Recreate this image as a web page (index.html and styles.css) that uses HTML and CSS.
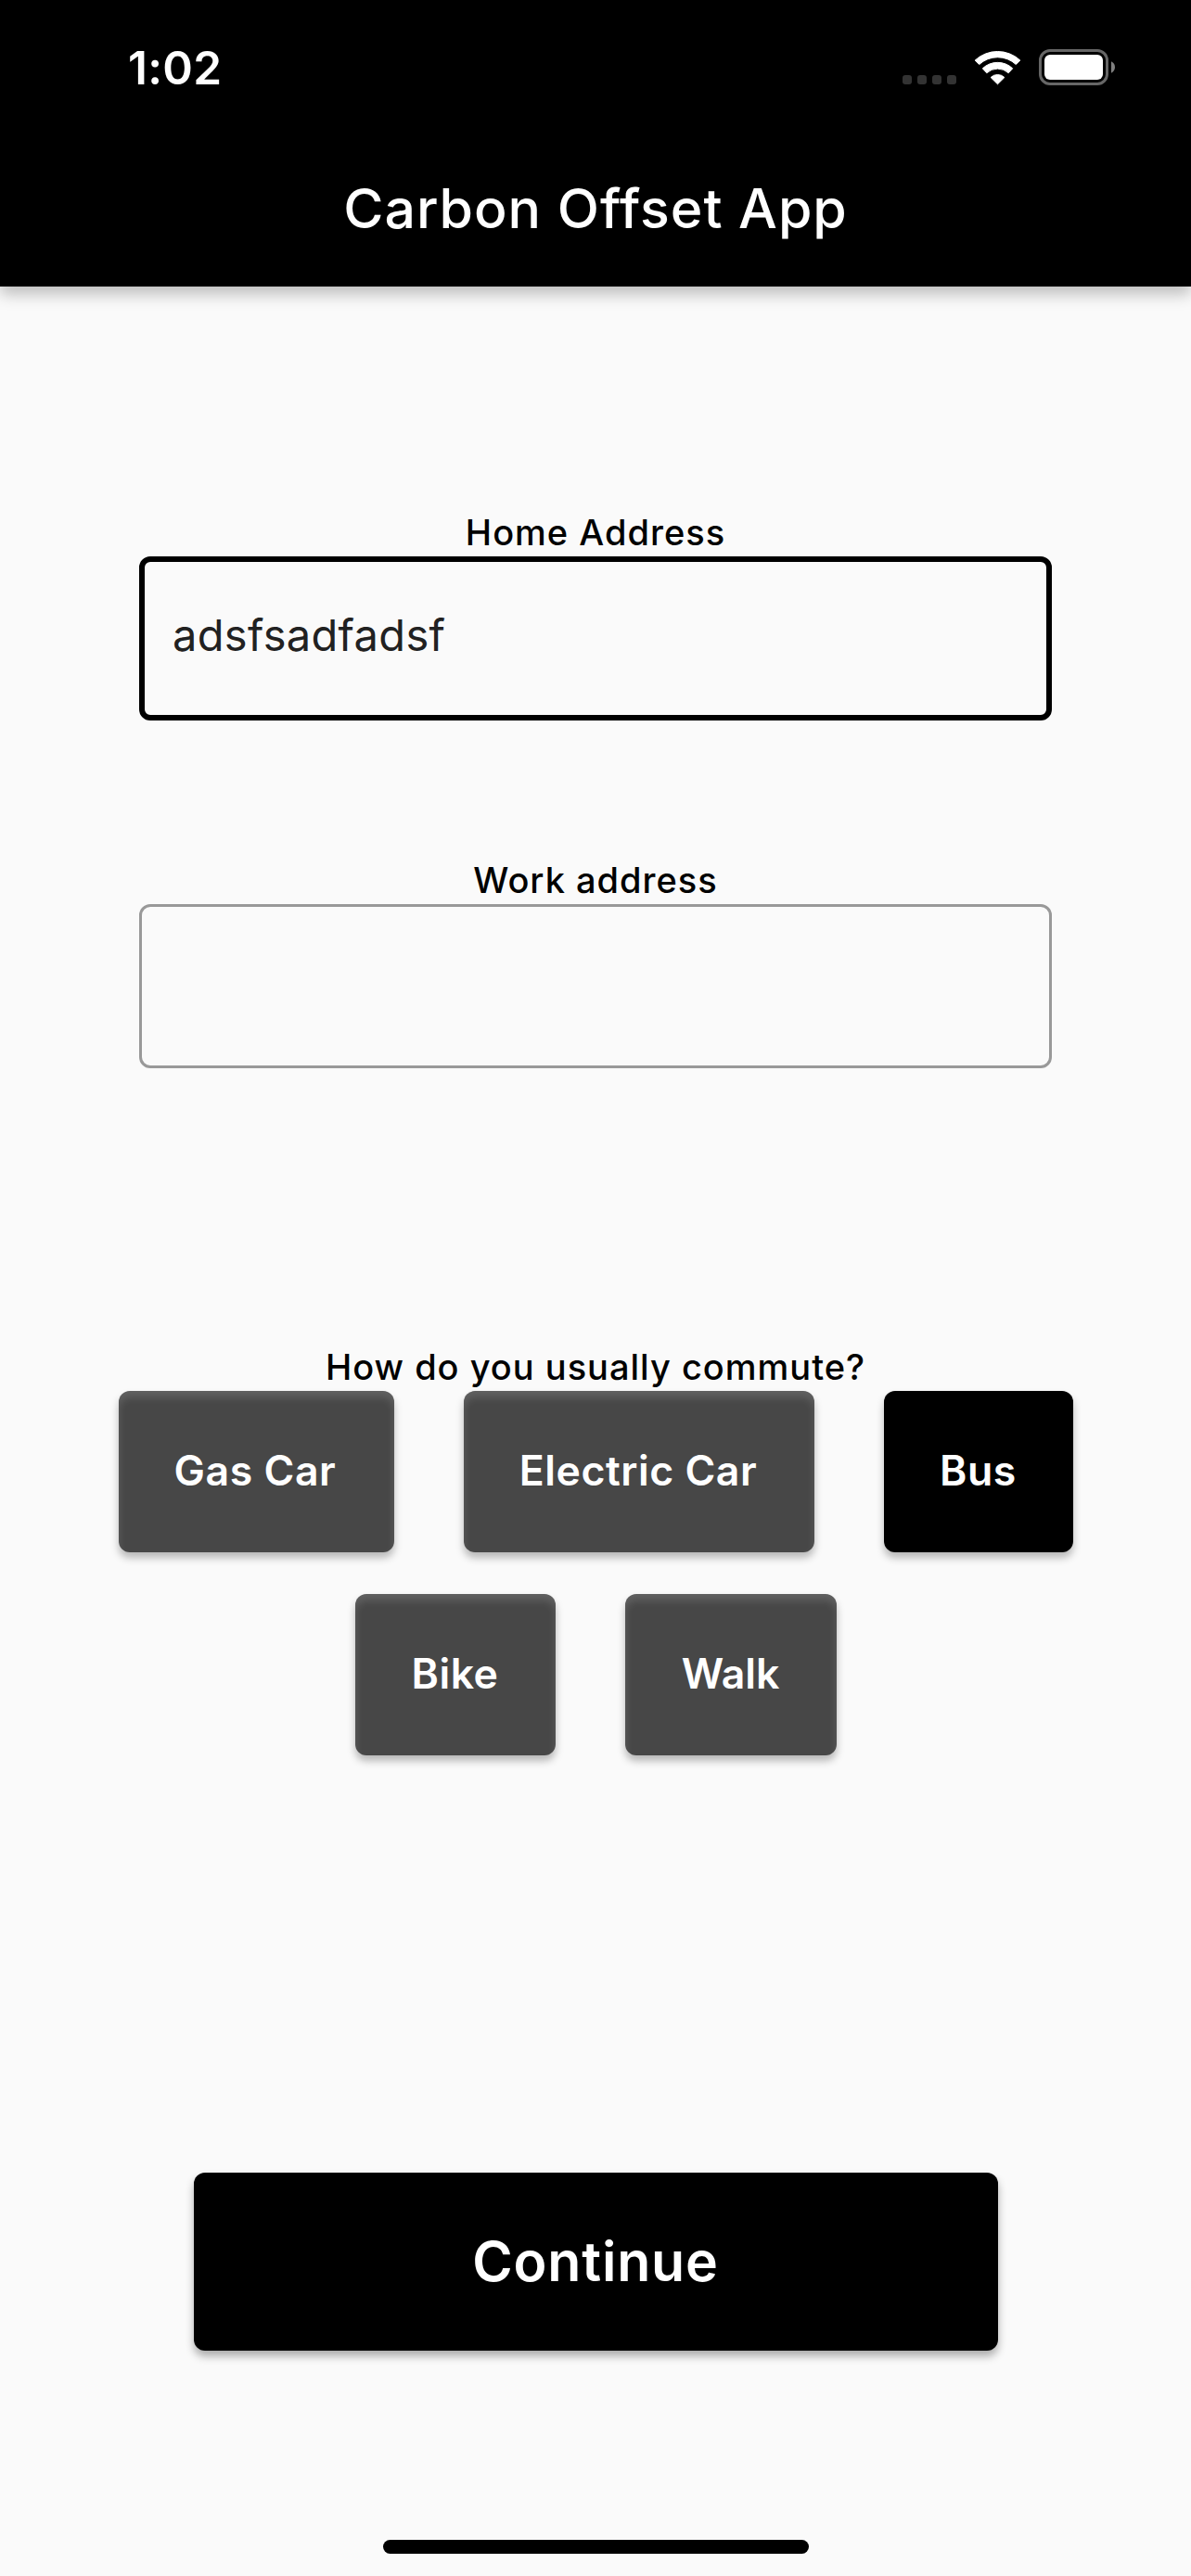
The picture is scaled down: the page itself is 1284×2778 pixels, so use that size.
FILE: index.html
```html
<!DOCTYPE html>
<html lang="en">
<head>
<meta charset="utf-8">
<title>Carbon Offset App</title>
<link rel="stylesheet" href="styles.css">
</head>
<body>
<div class="screen">
  <header class="app-bar">
    <div class="status-bar">
      <span class="time">1:02</span>
      <div class="status-icons">
        <svg class="signal" width="58" height="10" viewBox="0 0 58 10"><g fill="#333"><rect width="10" height="10" rx="3"/><rect x="16" width="10" height="10" rx="3"/><rect x="32" width="10" height="10" rx="3"/><rect x="48" width="10" height="10" rx="3"/></g></svg>
        <svg class="wifi" width="51" height="38" viewBox="0 0 51 38"><g fill="#fff" stroke="#fff" stroke-width="1" stroke-linejoin="round"><path d="M1.2 11A35.8 35.8 0 0 1 49.8 11L45.3 15.5A29.2 29.2 0 0 0 5.7 15.5Z"/><path d="M9.3 19.8A23.6 23.6 0 0 1 41.7 19.8L37.2 24.7A17.2 17.2 0 0 0 13.8 24.7Z"/><path d="M18.1 29.5A10.6 10.6 0 0 1 32.9 29.5L25.5 36.8Z"/></g></svg>
        <svg class="battery" width="83" height="39" viewBox="0 0 83 39"><rect x="1.5" y="1.5" width="72" height="36" rx="10.5" fill="none" stroke="#666" stroke-width="3"/><rect x="6" y="6" width="63" height="27" rx="6" fill="#fff"/><path d="M78 13.3C80.700 14.500 82 17 82 19.500S80.700 24.500 78 25.700Z" fill="#808080"/></svg>
      </div>
    </div>
    <h1 class="title">Carbon Offset App</h1>
  </header>
  <main class="form">
    <label class="field"><span class="label home">Home Address</span><span class="input focused">adsfsadfadsf</span></label>
    <label class="field"><span class="label work">Work address</span><span class="input"></span></label>
    <section class="commute">
      <span class="label question">How do you usually commute?</span>
      <div class="options">
        <div class="row">
          <button class="option gas">Gas Car</button>
          <button class="option electric">Electric Car</button>
          <button class="option bus selected">Bus</button>
        </div>
        <div class="row">
          <button class="option bike">Bike</button>
          <button class="option walk">Walk</button>
        </div>
      </div>
    </section>
    <button class="continue">Continue</button>
  </main>
  <div class="home-indicator"></div>
</div>
</body>
</html>
```
FILE: styles.css
```css
* { box-sizing: border-box; }
body { margin: 0; background: #fafafa; font-family: Inter, "Liberation Sans", sans-serif; color: #000; }
.screen { width: 1284px; height: 2778px; display: flex; flex-direction: column; align-items: center; overflow: hidden; }
.app-bar { width: 100%; height: 309px; flex: none; background: #000; color: #fff; box-shadow: 0 8px 16px rgba(0, 0, 0, .25); }
.status-bar { height: 141px; padding: 53px 81px 0 138px; display: flex; justify-content: space-between; align-items: flex-start; }
.time { font-size: 49.5px; font-weight: 600; line-height: 40px; letter-spacing: .3px; }
.status-icons { display: flex; align-items: flex-start; height: 39px; }
.signal { margin: 28px 19px 0 0; }
.wifi { margin: .5px 19px 0 0; }
.status-icons svg { flex: none; }
.title { margin: 0; height: 168px; line-height: 168px; text-align: center; font-size: 59px; font-weight: 500; letter-spacing: .96px; }
.form { display: flex; flex-direction: column; align-items: center; padding-top: 239px; flex: 1; }
.field { display: flex; flex-direction: column; align-items: center; margin-bottom: 146px; }
.label { height: 52px; line-height: 52px; font-size: 38px; font-weight: 500; letter-spacing: 1px; white-space: nowrap; }
.input { width: 984px; height: 177px; border: 3px solid #999; border-radius: 12px; display: flex; align-items: center; padding: 0 33px 8px; font-size: 47px; letter-spacing: .33px; color: #212121; }
.input.focused { border: 6px solid #000; padding-left: 30px; }
.commute { margin-top: 150px; display: flex; flex-direction: column; align-items: center; }
.options { display: flex; flex-direction: column; align-items: center; gap: 45px; }
.row { display: flex; gap: 75px; }
button { border: 0; font-family: inherit; font-weight: 600; color: #fff; border-radius: 12px; white-space: nowrap; }
.option { height: 174px; padding: 0 0 2px; font-size: 44.6px; letter-spacing: .55px; background: #474747; box-shadow: inset 0 7px 9px rgba(255, 255, 255, .14), 0 6px 8px rgba(0, 0, 0, .27); }
.option.selected { background: #000; box-shadow: 0 6px 8px rgba(0, 0, 0, .27); }
.gas { width: 297px; padding-right: 2px; }
.electric { width: 378px; padding-right: 1px; }
.bus { width: 204px; }
.bike { width: 216px; }
.walk { width: 228px; letter-spacing: 0; }
.continue { margin-top: 450px; width: 867px; height: 192px; padding: 0 0 2px; font-size: 59px; letter-spacing: .85px; background: #000; box-shadow: 0 6px 10px rgba(0, 0, 0, .32); }
.home-indicator { width: 459px; height: 15px; border-radius: 8px; background: #000; margin-bottom: 24px; flex: none; }
```
